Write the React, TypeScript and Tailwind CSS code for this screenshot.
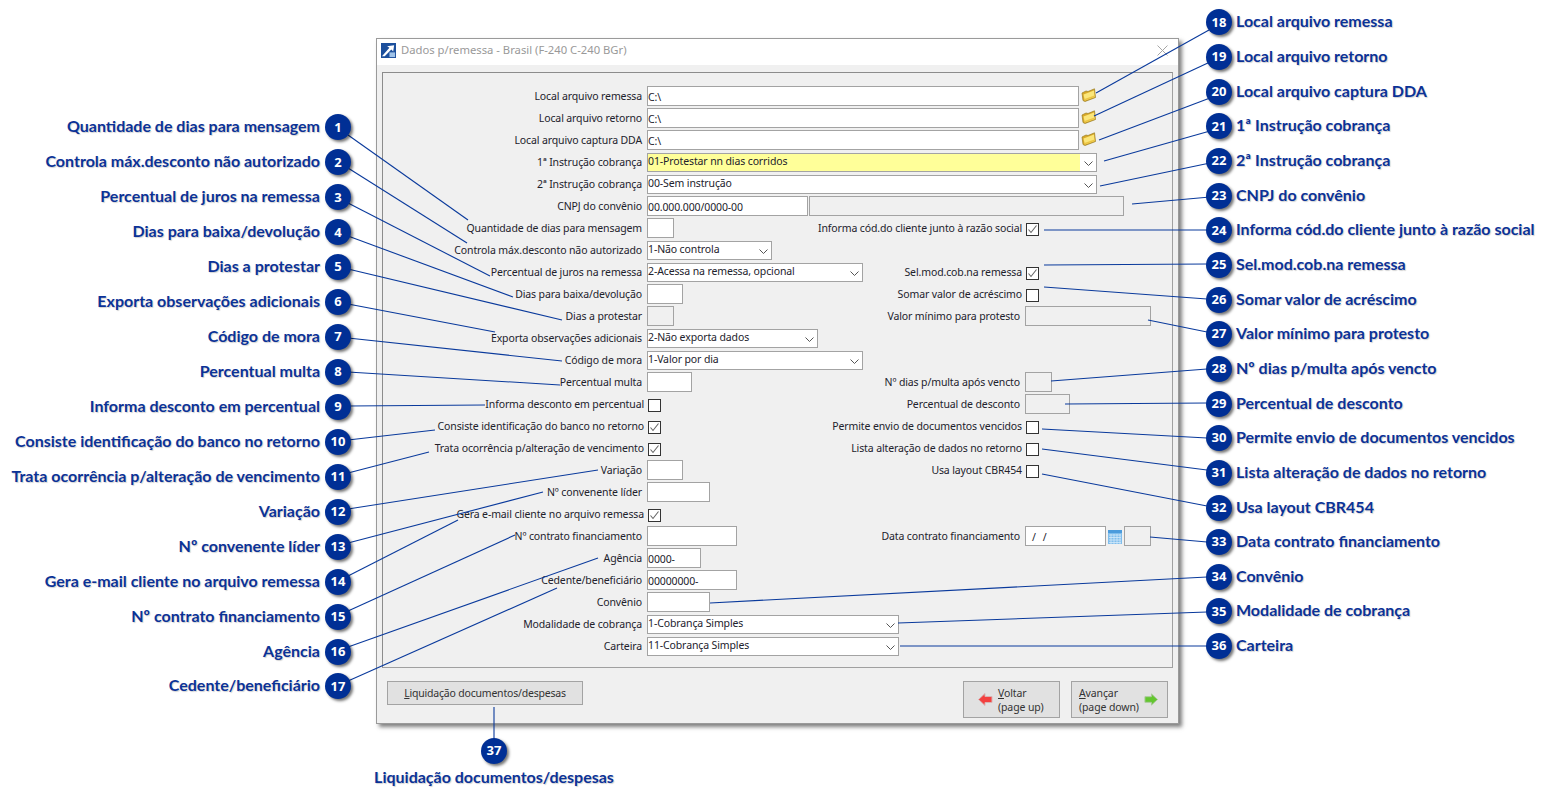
import type { ReactNode } from 'react'

const leftNotes = [
  'Quantidade de dias para mensagem', 'Controla máx.desconto não autorizado', 'Percentual de juros na remessa',
  'Dias para baixa/devolução', 'Dias a protestar', 'Exporta observações adicionais', 'Código de mora', 'Percentual multa',
  'Informa desconto em percentual', 'Consiste identificação do banco no retorno', 'Trata ocorrência p/alteração de vencimento',
  'Variação', 'Nº convenente líder', 'Gera e-mail cliente no arquivo remessa', 'Nº contrato financiamento', 'Agência', 'Cedente/beneficiário',
]

const rightNotes = [
  'Local arquivo remessa', 'Local arquivo retorno', 'Local arquivo captura DDA', '1ª Instrução cobrança', '2ª Instrução cobrança',
  'CNPJ do convênio', 'Informa cód.do cliente junto à razão social', 'Sel.mod.cob.na remessa', 'Somar valor de acréscimo',
  'Valor mínimo para protesto', 'Nº dias p/multa após vencto', 'Percentual de desconto', 'Permite envio de documentos vencidos',
  'Lista alteração de dados no retorno', 'Usa layout CBR454', 'Data contrato financiamento', 'Convênio', 'Modalidade de cobrança', 'Carteira',
]

// x1 y1 x2 y2 of every leader line, in page pixels
const leaders = [
  [348, 135, 468, 220], [348, 168, 467, 243], [348, 203, 490, 276], [348, 236, 513, 297], [348, 269, 562, 320],
  [348, 304, 495, 332], [348, 338, 562, 361], [348, 372, 560, 385], [348, 406, 485, 405], [348, 440, 435, 430],
  [348, 473, 429, 452], [348, 509, 598, 470], [348, 543, 543, 492], [348, 576, 458, 520], [348, 611, 515, 535],
  [348, 647, 598, 558], [348, 681, 557, 588],
  [1096, 93, 1209, 30], [1094, 116, 1210, 62], [1099, 140, 1210, 98], [1104, 161, 1210, 131], [1100, 186, 1210, 163],
  [1132, 204, 1210, 197], [1044, 230, 1208, 230], [1044, 265, 1207, 264], [1044, 287, 1207, 299], [1148, 320, 1207, 332],
  [1051, 381, 1207, 369], [1065, 404, 1207, 403], [1042, 429, 1207, 438], [1042, 449, 1207, 470], [1042, 474, 1207, 506],
  [1150, 537, 1207, 542], [710, 603, 1207, 577], [898, 623, 1207, 612], [900, 646, 1207, 646], [494, 707, 494, 740],
]

function Marker({ n }: { n: number }) {
  return (
    <span className="relative z-20 flex h-[26px] w-[26px] shrink-0 items-center justify-center rounded-full bg-[#002f95] text-[13px] font-bold text-white shadow-[2px_2px_3px_rgba(0,0,0,0.55)]">
      {n}
    </span>
  )
}

function NoteText({ children }: { children: ReactNode }) {
  return <span className="whitespace-nowrap pb-[2px] font-['Lato',sans-serif] text-[16px] font-bold leading-[20px] text-[#0b3297] [text-shadow:1px_1px_1px_rgba(0,0,0,0.18)]">{children}</span>
}

function Chevron() {
  return (
    <svg width="9" height="5" viewBox="0 0 9 5" className="shrink-0">
      <path d="M0.5 0.5 L4.5 4.5 L8.5 0.5" fill="none" stroke="#555" strokeWidth="1" />
    </svg>
  )
}

function Input({ w, value, off }: { w: string; value?: string; off?: boolean }) {
  return <div className={`h-[20px] shrink-0 border border-[#a3a3a3] pt-[2px] leading-[16px] ${off ? 'bg-[#f0f0f0]' : 'bg-white'} ${w}`}>{value}</div>
}

function Select({ w, value, hi }: { w: string; value: string; hi?: boolean }) {
  return (
    <div className={`flex h-[19px] shrink-0 border border-[#a3a3a3] bg-white leading-[14px] ${w}`}>
      <span className={`flex-1 ${hi ? 'bg-[#ffff99]' : ''}`}>{value}</span>
      <span className="flex w-[16px] items-center justify-center pt-[2px]"><Chevron /></span>
    </div>
  )
}

function Check({ on }: { on?: boolean }) {
  return (
    <div className="ml-px mt-[3px] flex h-[13px] w-[13px] shrink-0 items-center justify-center border border-[#333] bg-white">
      {on && (
        <svg width="11" height="11" viewBox="0 0 11 11">
          <path d="M1.5 5.5 L4 8.5 L9.5 1.5" fill="none" stroke="#666" strokeWidth="1.1" />
        </svg>
      )}
    </div>
  )
}

function Folder() {
  return (
    <svg width="15" height="14" viewBox="0 0 15 14" className="ml-[2px] mt-[-3px] shrink-0">
      <path d="M1 5 L5 3 L7 3.5 L13.5 0.8 L14.5 9.5 L4 13.5 L2 12.5 Z" fill="#d9a928" stroke="#9a7d22" strokeWidth="0.7" />
      <path d="M2.5 6.5 L13 2.6 L13.6 9 L3.8 12.6 Z" fill="#fbe67a" />
      <path d="M3.5 11 L13.4 7.4 L13.6 9 L3.8 12.6 Z" fill="#ecc544" />
    </svg>
  )
}

function Calendar() {
  return (
    <svg width="14" height="15" viewBox="0 0 14 15" className="mx-[2px] shrink-0">
      <rect x="0" y="1" width="14" height="14" fill="#7fbdec" />
      <rect x="0" y="1" width="14" height="3" fill="#4b9bdc" />
      <path d="M1 6H13M1 8.5H13M1 11H13M1 13.5H13M3 5V15M6 5V15M9 5V15M12 5V15" stroke="#d4eafa" strokeWidth="0.8" />
    </svg>
  )
}

// one form line: left label + control, and optionally the right-hand pair
function Row({ label, check, children, right, rightCheck, rightControl }: { label: string; check?: boolean; children?: ReactNode; right?: string; rightCheck?: boolean; rightControl?: ReactNode }) {
  return (
    <div className="flex h-[22px] items-center">
      <div className={`w-[259px] shrink-0 whitespace-nowrap pt-[2px] text-right ${check ? 'relative left-[2px]' : ''}`}>{label}</div>
      <div className={`ml-[5px] flex items-center ${right ? 'w-[216px] shrink-0' : 'flex-1'}`}>{children}</div>
      {right && <div className={`flex w-[162px] shrink-0 justify-end whitespace-nowrap pt-[2px] ${rightCheck ? 'pr-[3px]' : 'pr-[5px]'}`}>{right}</div>}
      {rightControl}
    </div>
  )
}

function Form() {
  return (
    <div className="mx-[5px] mt-[7px] h-[596px] border border-[#a0a0a0] border-t-[#8c8c8c] border-l-[#8c8c8c] pt-[12px] font-['Noto_Sans',sans-serif] text-[10.5px] tracking-[-0.12px] text-[#22222c]">
      <Row label="Local arquivo remessa"><Input w="w-[432px]" value="C:\" /><Folder /></Row>
      <Row label="Local arquivo retorno"><Input w="w-[432px]" value="C:\" /><Folder /></Row>
      <Row label="Local arquivo captura DDA"><Input w="w-[432px]" value="C:\" /><Folder /></Row>
      <Row label="1ª Instrução cobrança"><Select w="w-[450px]" value="01-Protestar nn dias corridos" hi /></Row>
      <Row label="2ª Instrução cobrança"><Select w="w-[450px]" value="00-Sem instrução" /></Row>
      <Row label="CNPJ do convênio"><Input w="w-[161px]" value="00.000.000/0000-00" /><div className="w-px" /><Input w="w-[315px]" off /></Row>
      <Row label="Quantidade de dias para mensagem" right="Informa cód.do cliente junto à razão social" rightCheck rightControl={<Check on />}><Input w="w-[27px]" /></Row>
      <Row label="Controla máx.desconto não autorizado"><Select w="w-[125px]" value="1-Não controla" /></Row>
      <Row label="Percentual de juros na remessa" right="Sel.mod.cob.na remessa" rightCheck rightControl={<Check on />}><Select w="w-[216px]" value="2-Acessa na remessa, opcional" /></Row>
      <Row label="Dias para baixa/devolução" right="Somar valor de acréscimo" rightCheck rightControl={<Check />}><Input w="w-[36px]" /></Row>
      <Row label="Dias a protestar" right="Valor mínimo para protesto" rightControl={<Input w="w-[126px]" off />}><Input w="w-[27px]" off /></Row>
      <Row label="Exporta observações adicionais"><Select w="w-[171px]" value="2-Não exporta dados" /></Row>
      <Row label="Código de mora"><Select w="w-[216px]" value="1-Valor por dia" /></Row>
      <Row label="Percentual multa" right="Nº dias p/multa após vencto" rightControl={<Input w="w-[27px]" off />}><Input w="w-[45px]" /></Row>
      <Row label="Informa desconto em percentual" check right="Percentual de desconto" rightControl={<Input w="w-[45px]" off />}><Check /></Row>
      <Row label="Consiste identificação do banco no retorno" check right="Permite envio de documentos vencidos" rightCheck rightControl={<Check />}><Check on /></Row>
      <Row label="Trata ocorrência p/alteração de vencimento" check right="Lista alteração de dados no retorno" rightCheck rightControl={<Check />}><Check on /></Row>
      <Row label="Variação" right="Usa layout CBR454" rightCheck rightControl={<Check />}><Input w="w-[36px]" /></Row>
      <Row label="Nº convenente líder"><Input w="w-[63px]" /></Row>
      <Row label="Gera e-mail cliente no arquivo remessa" check><Check on /></Row>
      <Row
        label="Nº contrato financiamento"
        right="Data contrato financiamento"
        rightControl={<><Input w="w-[81px] pl-[6px] tracking-[2px]" value="/ /" /><Calendar /><Input w="w-[27px]" off /></>}
      >
        <Input w="w-[90px]" />
      </Row>
      <Row label="Agência"><Input w="w-[54px]" value="0000-" /></Row>
      <Row label="Cedente/beneficiário"><Input w="w-[90px]" value="00000000-" /></Row>
      <Row label="Convênio"><Input w="w-[63px]" /></Row>
      <Row label="Modalidade de cobrança"><Select w="w-[252px]" value="1-Cobrança Simples" /></Row>
      <Row label="Carteira"><Select w="w-[252px]" value="11-Cobrança Simples" /></Row>
    </div>
  )
}

function NavButton({ children }: { children: ReactNode }) {
  return <div className="flex h-[37px] w-[97px] items-center border border-[#a3a3a3] bg-[#e1e1e1] font-['Noto_Sans',sans-serif] text-[10.5px] leading-[14px] tracking-[-0.12px] text-[#333]">{children}</div>
}

function Dialog() {
  return (
    <div className="flex h-[686px] w-[803px] flex-col border border-[#9a9a9a] bg-[#f0f0f0] shadow-[3px_3px_4px_rgba(0,0,0,0.5)]">
      <div className="flex h-[26px] shrink-0 items-center bg-white pb-[4px] pl-[4px] pr-[10px]">
        <svg width="15" height="15" viewBox="0 0 16 16" className="shrink-0">
          <rect width="16" height="16" fill="#1c4f9c" />
          <path d="M1 14 L9 5 L6.5 3.5 L14 2.5 L13 9 L11 7 L4 14 Z" fill="#fff" />
          <rect x="9" y="10" width="6" height="5" fill="#9fc2e8" />
        </svg>
        <span className="ml-[5px] font-['Noto_Sans',sans-serif] text-[11.25px] text-[#999]">Dados p/remessa - Brasil (F-240 C-240 BGr)</span>
        <svg width="11" height="11" viewBox="0 0 11 11" className="ml-auto">
          <path d="M0.5 0.5 L10.5 10.5 M10.5 0.5 L0.5 10.5" stroke="#a6a6a6" strokeWidth="1" />
        </svg>
      </div>
      <Form />
      <div className="mx-[10px] mt-[13px] flex items-start">
        <div className="flex h-[24px] w-[196px] items-center justify-center border border-[#a3a3a3] bg-[#e1e1e1] pt-px font-['Noto_Sans',sans-serif] text-[10.5px] tracking-[-0.2px] text-[#333]">
          <span><u>L</u>iquidação documentos/despesas</span>
        </div>
        <div className="ml-auto flex gap-[11px]">
          <NavButton>
            <svg width="15" height="13" viewBox="0 0 15 13" className="ml-[14px] mr-[5px] shrink-0">
              <path d="M0.5 6.5 L7 0.5 V3.5 H14 V9.5 H7 V12.5 Z" fill="#f3403f" stroke="#d9b4b4" />
            </svg>
            <span>
              <u>V</u>oltar
              <br />
              (page up)
            </span>
          </NavButton>
          <NavButton>
            <span className="ml-[7px] whitespace-nowrap">
              <u>A</u>vançar
              <br />
              (page down)
            </span>
            <svg width="14" height="13" viewBox="0 0 15 13" className="ml-[5px] shrink-0">
              <path d="M14.5 6.5 L8 0.5 V3.5 H1 V9.5 H8 V12.5 Z" fill="#63c62f" stroke="#a9c99a" />
            </svg>
          </NavButton>
        </div>
      </div>
    </div>
  )
}

export default function App() {
  return (
    <div className="relative flex h-[805px] w-[1550px] overflow-hidden bg-white font-['Noto_Sans',sans-serif]">
      <div className="flex w-[351px] shrink-0 flex-col pt-[110px]">
        {leftNotes.map((t, i) => (
          <div key={t} className="flex h-[34.94px] items-center justify-end gap-[5px]">
            <NoteText>{t}</NoteText>
            <Marker n={i + 1} />
          </div>
        ))}
      </div>

      <div className="ml-[25px] flex w-[803px] shrink-0 flex-col pt-[38px]">
        <Dialog />
        <div className="ml-[-1px] mt-[14px] flex w-[238px] flex-col items-center gap-[3px]">
          <Marker n={37} />
          <NoteText>Liquidação documentos/despesas</NoteText>
        </div>
      </div>

      <div className="ml-[27px] flex flex-col pt-[5px]">
        {rightNotes.map((t, i) => (
          <div key={t} className="flex h-[34.67px] items-center gap-[4px]">
            <Marker n={i + 18} />
            <NoteText>{t}</NoteText>
          </div>
        ))}
      </div>

      <svg width="1550" height="805" className="pointer-events-none absolute left-0 top-0 z-10">
        {leaders.map(([x1, y1, x2, y2]) => (
          <line key={`${x1}-${y1}`} x1={x1} y1={y1} x2={x2} y2={y2} stroke="#0a3a9c" strokeWidth="1.1" />
        ))}
      </svg>
    </div>
  )
}
